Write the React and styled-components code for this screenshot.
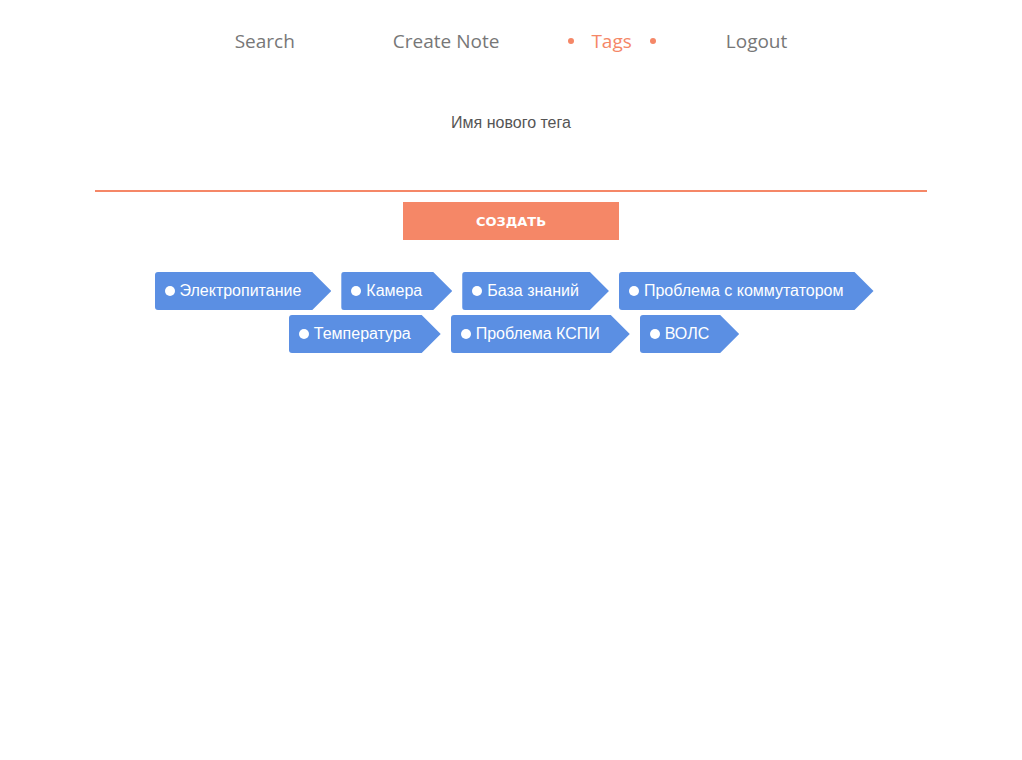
import styled, { createGlobalStyle } from "styled-components";

const GlobalStyle = createGlobalStyle`
    body {
        margin: 0;
        background: #fff;
        font-family: "Liberation Sans", Arial, sans-serif;
    }
`;

const Page = styled.div`
    display: flex;
    flex-direction: column;
    align-items: center;
`;

const Nav = styled.nav`
    display: flex;
    justify-content: center;
    gap: 98px;
    padding-top: 30px;
    height: 52px;
    box-sizing: border-box;
`;

const NavItem = styled.a`
    font-family: "Open Sans", "Liberation Sans", sans-serif;
    font-size: 19px;
    line-height: 22px;
    color: ${(p) => (p.active ? "#f58767" : "#777")};
    cursor: pointer;
    display: flex;
    align-items: center;
`;

const Dot = styled.span`
    width: 6px;
    height: 6px;
    border-radius: 50%;
    background: #f58767;
    margin: ${(p) => (p.side === "left" ? "0 17px 0 -29px" : "0 -28px 0 18px")};
`;

const Form = styled.div`
    width: 832px;
    margin-top: 62px;
    display: flex;
    flex-direction: column;
    align-items: center;
`;

const Label = styled.label`
    font-size: 16px;
    line-height: 18px;
    color: #555;
`;

const Input = styled.input`
    width: 100%;
    height: 60px;
    border: none;
    border-bottom: 2px solid #f58767;
    outline: none;
    font-size: 16px;
    background: transparent;
    box-sizing: border-box;
`;

const Button = styled.button`
    margin-top: 10px;
    width: 216px;
    height: 38px;
    border: none;
    background: #f58767;
    color: #fff;
    font-family: "DejaVu Sans", Verdana, sans-serif;
    font-weight: bold;
    font-size: 13px;
    cursor: pointer;
`;

const TagList = styled.div`
    width: 832px;
    margin-top: 32px;
    padding-left: 6px;
    box-sizing: border-box;
    display: flex;
    flex-wrap: wrap;
    justify-content: center;
    gap: 5px 10px;
`;

const Tag = styled.div`
    display: flex;
    align-items: center;
    gap: 5px;
    height: 38px;
    padding: 0 30px 0 10px;
    background: #5b8fe3;
    color: #fff;
    font-size: 16px;
    border-radius: 3px 0 0 3px;
    clip-path: polygon(0 0, calc(100% - 19px) 0, 100% 50%, calc(100% - 19px) 100%, 0 100%);
    cursor: pointer;
`;

const TagDot = styled.span`
    width: 10px;
    height: 10px;
    border-radius: 50%;
    background: #fff;
`;

const tags = [
    "Электропитание",
    "Камера",
    "База знаний",
    "Проблема с коммутатором",
    "Температура",
    "Проблема КСПИ",
    "ВОЛС",
];

const App = () => {
    return (
        <Page>
            <GlobalStyle />
            <Nav>
                <NavItem>Search</NavItem>
                <NavItem>Create Note</NavItem>
                <NavItem active>
                    <Dot side="left" />
                    Tags
                    <Dot side="right" />
                </NavItem>
                <NavItem>Logout</NavItem>
            </Nav>
            <Form>
                <Label>Имя нового тега</Label>
                <Input />
                <Button>СОЗДАТЬ</Button>
            </Form>
            <TagList>
                {tags.map((t) => (
                    <Tag key={t}>
                        <TagDot />
                        {t}
                    </Tag>
                ))}
            </TagList>
        </Page>
    );
};

export default App;
